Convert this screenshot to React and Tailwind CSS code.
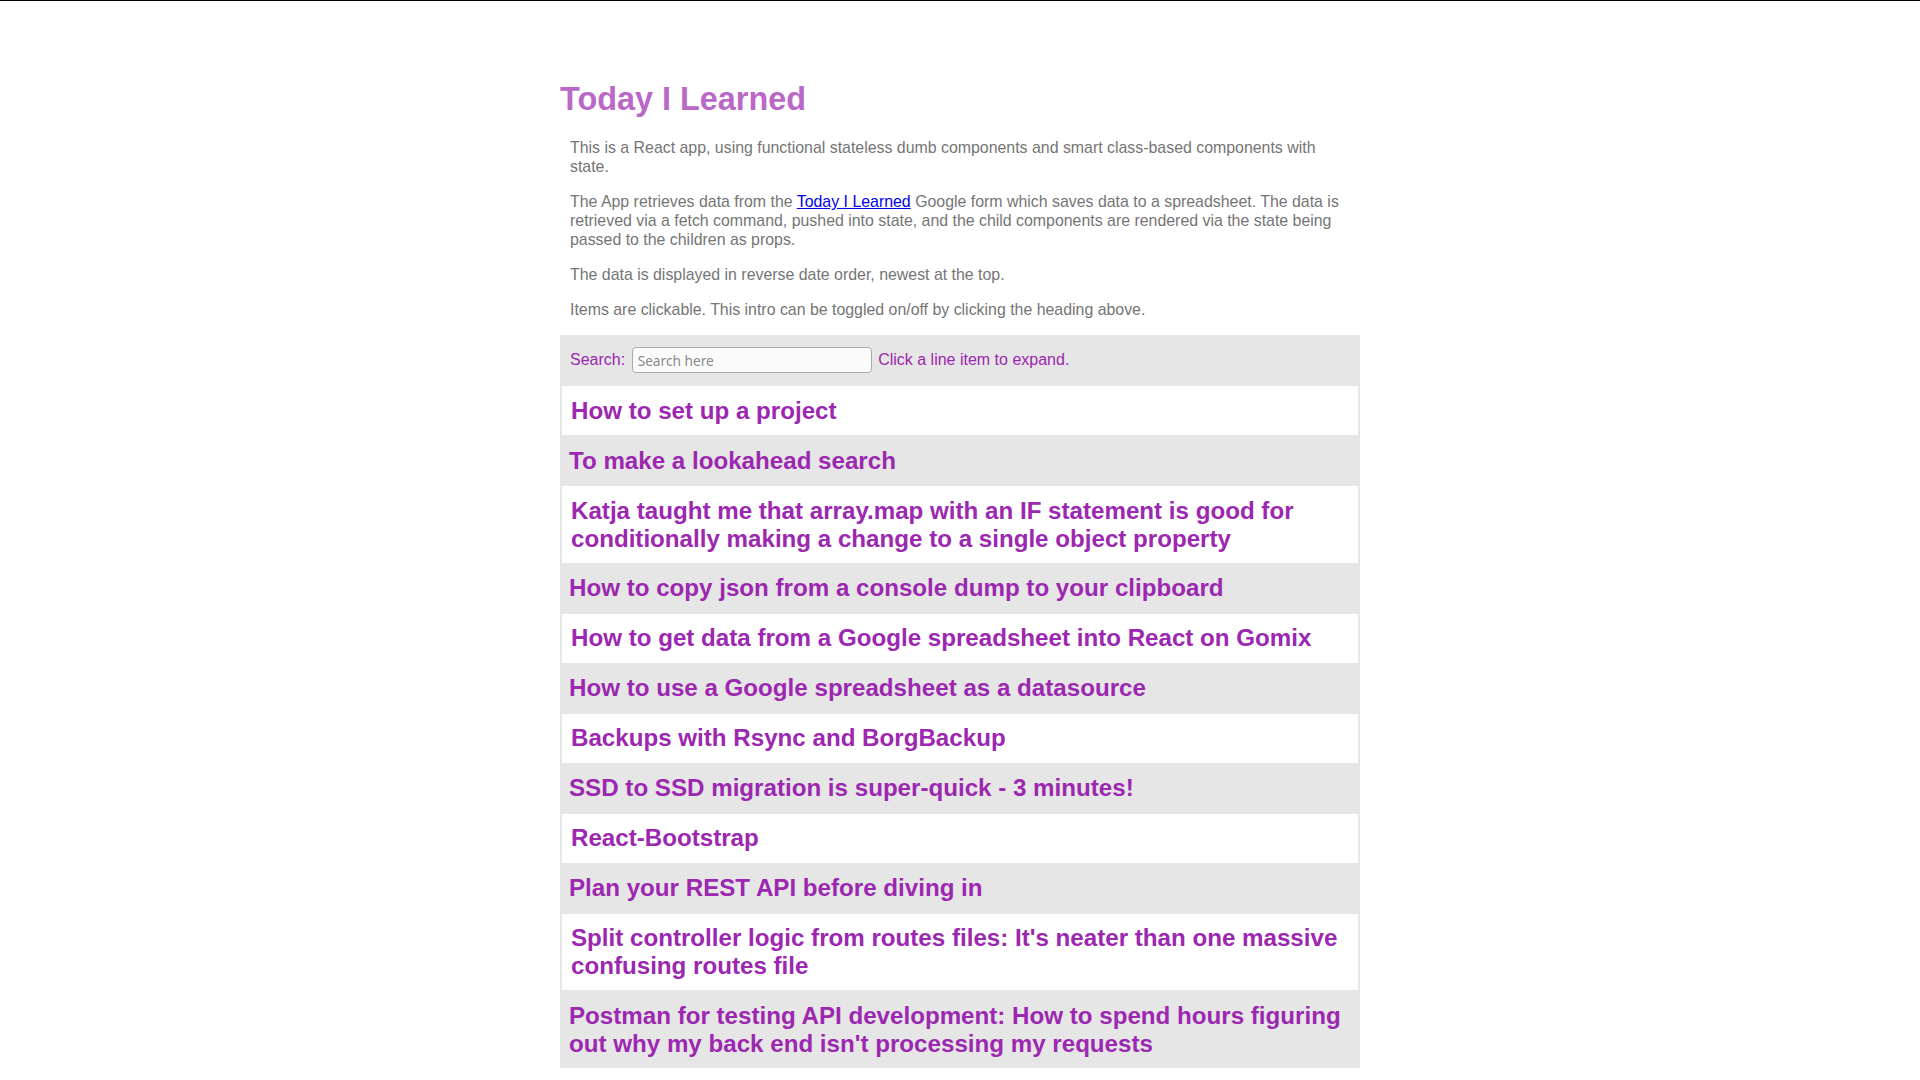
import { useState } from "react";

const items = [
  "How to set up a project",
  "To make a lookahead search",
  "Katja taught me that array.map with an IF statement is good for conditionally making a change to a single object property",
  "How to copy json from a console dump to your clipboard",
  "How to get data from a Google spreadsheet into React on Gomix",
  "How to use a Google spreadsheet as a datasource",
  "Backups with Rsync and BorgBackup",
  "SSD to SSD migration is super-quick - 3 minutes!",
  "React-Bootstrap",
  "Plan your REST API before diving in",
  "Split controller logic from routes files: It's neater than one massive confusing routes file",
  "Postman for testing API development: How to spend hours figuring out why my back end isn't processing my requests",
];

function App() {
  const [search, setSearch] = useState("");
  const [showIntro, setShowIntro] = useState(true);

  const filtered = items.filter((t) =>
    t.toLowerCase().includes(search.toLowerCase())
  );

  return (
    <div className="min-h-screen bg-white border-t border-black font-['Liberation_Sans',Arial,sans-serif]">
      <div className="w-[800px] mx-auto pt-[80px]">
        {/* Heading toggles the intro */}
        <h1
          onClick={() => setShowIntro(!showIntro)}
          className="text-[32.4px] font-bold leading-[1.15] text-[#ba68c8] cursor-pointer"
        >
          Today I Learned
        </h1>

        {showIntro && (
          <div className="mt-[20px] px-[10px] text-[15.9px] leading-[19px] text-[#757575]">
            <p className="mb-[16px]">
              This is a React app, using functional stateless dumb components
              and smart class-based components with state.
            </p>
            <p className="mb-[16px]">
              The App retrieves data from the{" "}
              <a href="#" className="text-[#0000ee] underline">
                Today I Learned
              </a>{" "}
              Google form which saves data to a spreadsheet. The data is
              retrieved via a fetch command, pushed into state, and the child
              components are rendered via the state being passed to the children
              as props.
            </p>
            <p className="mb-[16px]">
              The data is displayed in reverse date order, newest at the top.
            </p>
            <p className="mb-[16px]">
              Items are clickable. This intro can be toggled on/off by clicking
              the heading above.
            </p>
          </div>
        )}

        <div className="bg-[#e6e6e6]">
          {/* Search bar */}
          <div className="flex items-center px-[10px] py-[12px] text-[16px] text-[#9c27b0]">
            <span>Search:</span>
            <input
              type="text"
              value={search}
              onChange={(e) => setSearch(e.target.value)}
              placeholder="Search here"
              className="ml-[6.5px] mr-[6.5px] w-[240px] h-[26px] px-[5px] rounded-[4px] border border-[#a9a9a9] bg-[#fbfbfb] text-[13.7px] text-[#333] font-['Noto_Sans',sans-serif] placeholder:text-[#8a8a8a] outline-none"
            />
            <span>Click a line item to expand.</span>
          </div>

          {/* Items */}
          {filtered.map((title, i) => (
            <div
              key={i}
              className={
                i % 2 === 0
                  ? "bg-white mx-[2px] my-px px-[9px] py-[10.6px] cursor-pointer"
                  : "px-[9px] py-[10.6px] cursor-pointer"
              }
            >
              <h2 className="text-[24.15px] font-bold leading-[1.15] text-[#9c27b0]">
                {title}
              </h2>
            </div>
          ))}
        </div>
      </div>
    </div>
  );
}

export default App;
